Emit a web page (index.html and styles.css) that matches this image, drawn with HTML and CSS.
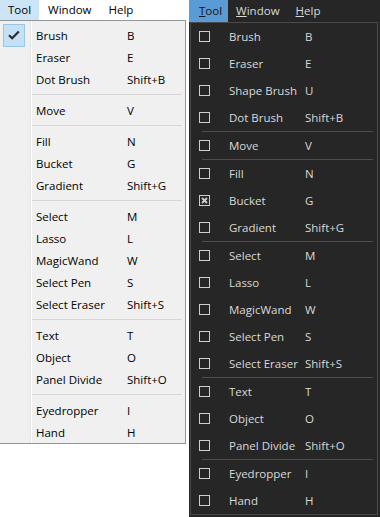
FILE: index.html
```html
<!DOCTYPE html>
<html lang="en">
<head>
  <meta charset="UTF-8" />
  <meta name="viewport" content="width=device-width, initial-scale=1.0"/>
  <title>Tool menu</title>
  <link rel="stylesheet" href="styles.css">
</head>
<body>
  <div class="screen">

    <!-- light theme -->
    <section class="pane light">
      <nav class="menubar">
        <span class="mi active">Tool</span>
        <span class="mi">Window</span>
        <span class="mi">Help</span>
      </nav>
      <div class="dropdown">
        <div class="item">
          <span class="gutter"><span class="checkbox-on">
            <svg width="12" height="10" viewBox="0 0 12 10"><path d="M1 5.2 L4.2 8.2 L10.8 1.4" fill="none" stroke="#2b2b2b" stroke-width="2.2"/></svg>
          </span></span>
          <span class="label">Brush</span><span class="key">B</span>
        </div>
        <div class="item"><span class="gutter"></span><span class="label">Eraser</span><span class="key">E</span></div>
        <div class="item"><span class="gutter"></span><span class="label">Dot Brush</span><span class="key">Shift+B</span></div>
        <div class="sep"></div>
        <div class="item"><span class="gutter"></span><span class="label">Move</span><span class="key">V</span></div>
        <div class="sep"></div>
        <div class="item"><span class="gutter"></span><span class="label">Fill</span><span class="key">N</span></div>
        <div class="item"><span class="gutter"></span><span class="label">Bucket</span><span class="key">G</span></div>
        <div class="item"><span class="gutter"></span><span class="label">Gradient</span><span class="key">Shift+G</span></div>
        <div class="sep"></div>
        <div class="item"><span class="gutter"></span><span class="label">Select</span><span class="key">M</span></div>
        <div class="item"><span class="gutter"></span><span class="label">Lasso</span><span class="key">L</span></div>
        <div class="item"><span class="gutter"></span><span class="label">MagicWand</span><span class="key">W</span></div>
        <div class="item"><span class="gutter"></span><span class="label">Select Pen</span><span class="key">S</span></div>
        <div class="item"><span class="gutter"></span><span class="label">Select Eraser</span><span class="key">Shift+S</span></div>
        <div class="sep"></div>
        <div class="item"><span class="gutter"></span><span class="label">Text</span><span class="key">T</span></div>
        <div class="item"><span class="gutter"></span><span class="label">Object</span><span class="key">O</span></div>
        <div class="item"><span class="gutter"></span><span class="label">Panel Divide</span><span class="key">Shift+O</span></div>
        <div class="sep"></div>
        <div class="item"><span class="gutter"></span><span class="label">Eyedropper</span><span class="key">I</span></div>
        <div class="item"><span class="gutter"></span><span class="label">Hand</span><span class="key">H</span></div>
      </div>
    </section>

    <!-- dark theme -->
    <section class="pane dark">
      <nav class="menubar">
        <span class="mi active"><u>T</u>ool</span>
        <span class="mi"><u>W</u>indow</span>
        <span class="mi"><u>H</u>elp</span>
      </nav>
      <div class="dropdown">
        <div class="item"><span class="box"></span><span class="label">Brush</span><span class="key">B</span></div>
        <div class="item"><span class="box"></span><span class="label">Eraser</span><span class="key">E</span></div>
        <div class="item"><span class="box"></span><span class="label">Shape Brush</span><span class="key">U</span></div>
        <div class="item"><span class="box"></span><span class="label">Dot Brush</span><span class="key">Shift+B</span></div>
        <div class="sep"></div>
        <div class="item"><span class="box"></span><span class="label">Move</span><span class="key">V</span></div>
        <div class="sep"></div>
        <div class="item"><span class="box"></span><span class="label">Fill</span><span class="key">N</span></div>
        <div class="item">
          <span class="box">
            <svg width="9" height="9" viewBox="0 0 9 9"><path d="M2 2 L7 7 M7 2 L2 7" stroke="#cfcfcf" stroke-width="1.8"/></svg>
          </span>
          <span class="label">Bucket</span><span class="key">G</span>
        </div>
        <div class="item"><span class="box"></span><span class="label">Gradient</span><span class="key">Shift+G</span></div>
        <div class="sep"></div>
        <div class="item"><span class="box"></span><span class="label">Select</span><span class="key">M</span></div>
        <div class="item"><span class="box"></span><span class="label">Lasso</span><span class="key">L</span></div>
        <div class="item"><span class="box"></span><span class="label">MagicWand</span><span class="key">W</span></div>
        <div class="item"><span class="box"></span><span class="label">Select Pen</span><span class="key">S</span></div>
        <div class="item"><span class="box"></span><span class="label">Select Eraser</span><span class="key">Shift+S</span></div>
        <div class="sep"></div>
        <div class="item"><span class="box"></span><span class="label">Text</span><span class="key">T</span></div>
        <div class="item"><span class="box"></span><span class="label">Object</span><span class="key">O</span></div>
        <div class="item"><span class="box"></span><span class="label">Panel Divide</span><span class="key">Shift+O</span></div>
        <div class="sep"></div>
        <div class="item"><span class="box"></span><span class="label">Eyedropper</span><span class="key">I</span></div>
        <div class="item"><span class="box"></span><span class="label">Hand</span><span class="key">H</span></div>
      </div>
    </section>

  </div>
</body>
</html>
```

FILE: styles.css
```css
body {
  margin: 0;
  padding: 0;
  font-family: "Open Sans", "Noto Sans", sans-serif;
  font-size: 11.5px;
  background: #ffffff;
}

.screen {
  display: flex;
  width: 380px;
  height: 517px;
  overflow: hidden;
}

.pane {
  display: flex;
  flex-direction: column;
}

.item {
  display: flex;
  align-items: center;
}

.label,
.key {
  white-space: nowrap;
}

/* ---------- light ---------- */

.light {
  width: 189px;
  background: #ffffff;
  color: #000000;
}

.light .menubar {
  display: flex;
  height: 20px;
  align-items: center;
}

.light .mi {
  height: 20px;
  line-height: 20px;
  padding: 0 8px;
}

.light .mi + .mi {
  margin-left: 1px;
}

.light .mi.active {
  background: #cce4f7;
}

.light .dropdown {
  width: 185px;
  padding: 3px 0 0;
  background:
    linear-gradient(to right, transparent 30px, #e2e3e3 30px, #e2e3e3 31px, #ffffff 31px, #ffffff 32px, transparent 32px),
    #f0f0f0;
  border-top: 1px solid #979797;
  border-right: 1px solid #979797;
  border-bottom: 1px solid #979797;
}

.light .item {
  height: 22px;
}

.light .gutter {
  width: 31px;
  height: 22px;
  display: flex;
  align-items: center;
}

.light .checkbox-on {
  width: 20px;
  height: 21px;
  margin-left: 3px;
  background: #c4e0f5;
  border: 1px solid #98c6ea;
  display: flex;
  align-items: center;
  justify-content: center;
}

.light .label {
  width: 91px;
  padding-left: 5px;
}

.light .sep {
  height: 1px;
  margin: 4px 3px 4px 32px;
  background: #d7d7d7;
}

/* ---------- dark ---------- */

.dark {
  width: 191px;
  background: #262626;
  color: #d9d9d9;
}

.dark .menubar {
  display: flex;
  height: 22px;
  align-items: center;
}

.dark .mi {
  height: 22px;
  line-height: 22px;
  padding: 0 8px;
}

.dark .mi.active {
  padding: 0 6px 0 10px;
  background: #5b9bd5;
  color: #111111;
}

.dark .mi + .mi {
  margin-left: 0;
}

.dark .dropdown {
  width: 186px;
  margin-left: 1px;
  padding: 0;
  background: #262626;
  border: 1px solid #4a4a4a;
}

.dark .item {
  height: 27px;
}

.dark .box {
  width: 9px;
  height: 9px;
  margin-left: 8px;
  border: 1px solid #cdcdcd;
  display: flex;
}

.dark .label {
  width: 76px;
  padding-left: 19px;
}

.dark .sep {
  height: 1px;
  margin: 0 4px 0 11px;
  background: #4e4e4e;
}
```
